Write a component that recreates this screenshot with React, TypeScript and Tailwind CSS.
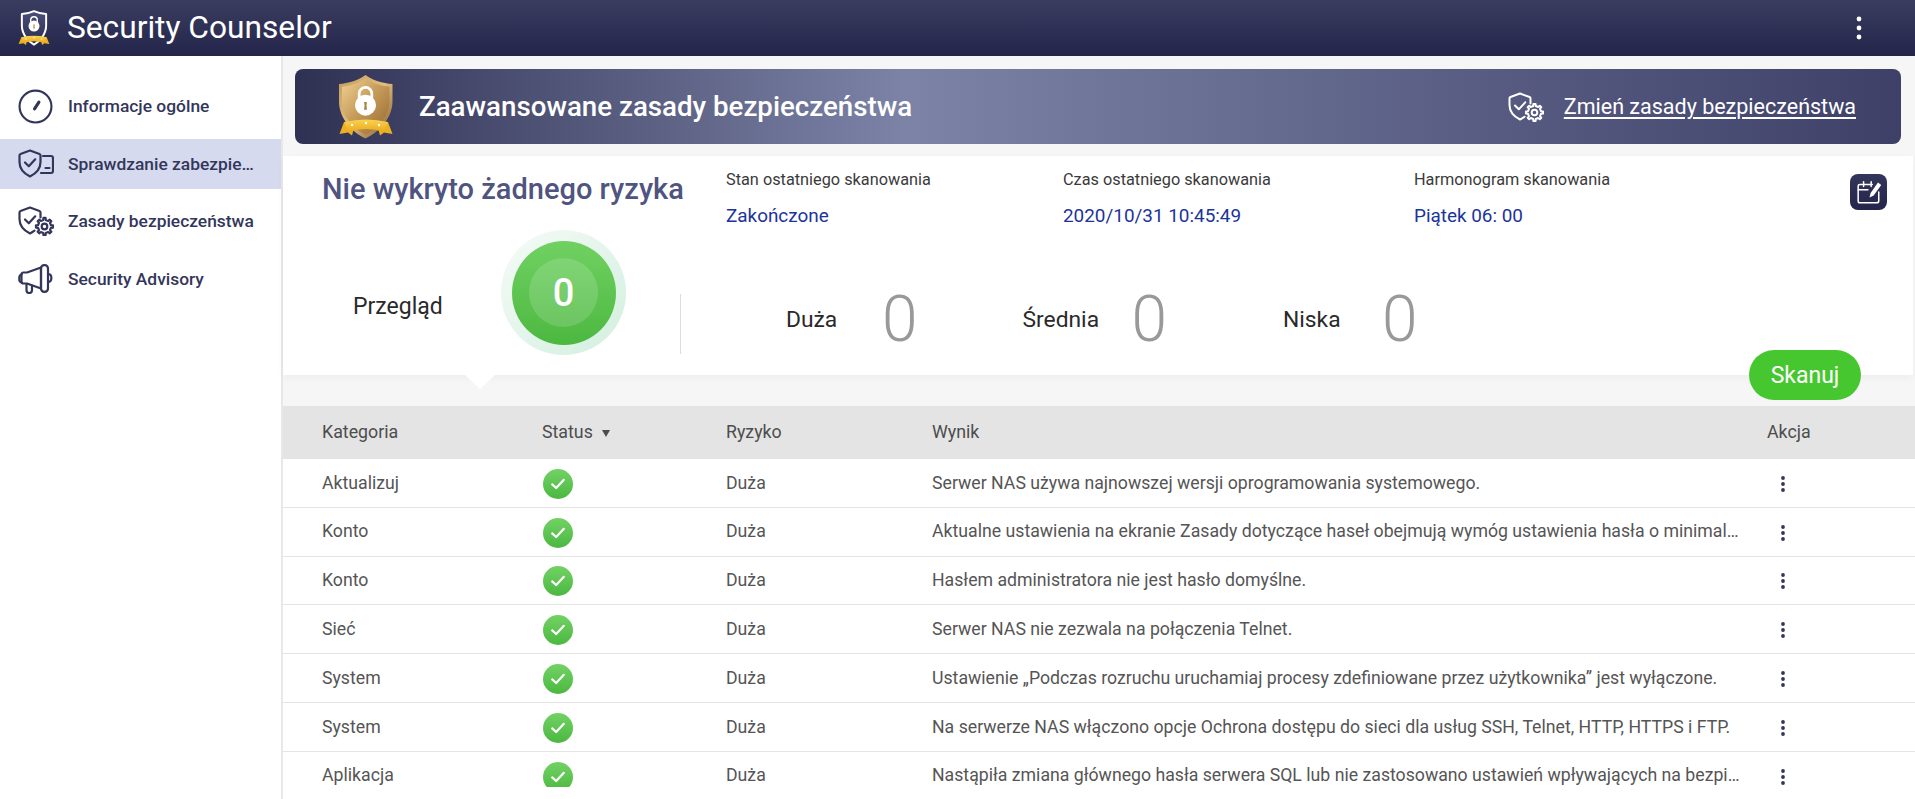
import React from "react";

const navy = "#33365a";

function gearPath(cx: number, cy: number, r1: number, r2: number, n: number) {
  const pts: string[] = [];
  const step = (Math.PI * 2) / n;
  for (let i = 0; i < n; i++) {
    const a = i * step;
    const d = step * 0.2;
    const p = (r: number, t: number) => `${(cx + r * Math.cos(t)).toFixed(2)} ${(cy + r * Math.sin(t)).toFixed(2)}`;
    pts.push(`${i === 0 ? "M" : "L"}${p(r1, a - d * 1.25)}`);
    pts.push(`L${p(r2, a - d * 0.8)}`);
    pts.push(`L${p(r2, a + d * 0.8)}`);
    pts.push(`L${p(r1, a + d * 1.25)}`);
  }
  return pts.join(" ") + " Z";
}

const FULL_SHIELD = "M12 1.5 L21.5 5 Q22.5 5.3 22.5 6.5 V13 C22.5 20 17 25 12 27.5 C7 25 1.5 20 1.5 13 V6.5 Q1.5 5.3 2.5 5 Z";
const OPEN_SHIELD = "M22.5 11.5 V6.5 Q22.5 5.3 21.5 5 L12 1.5 L2.5 5 Q1.5 5.3 1.5 6.5 V13 C1.5 20 7 25 12 27.5 C13.5 26.8 15 25.8 16.5 24.7";

function ShieldGear({ color, className, sw = 2.2 }: { color: string; className: string; sw?: number }) {
  return (
    <svg viewBox="0 0 36 30" className={className} fill="none" stroke={color} strokeWidth={sw} strokeLinejoin="round" strokeLinecap="round">
      <path d={OPEN_SHIELD} />
      <path d="M7 13.5 l3.8 3.8 l6.4 -7" />
      <path d={gearPath(26.5, 20.5, 6.6, 8.6, 8)} />
      <circle cx="26.5" cy="20.5" r="2.8" />
    </svg>
  );
}

function ShieldCard({ className }: { className: string }) {
  return (
    <svg viewBox="0 0 36 30" className={className} fill="none" stroke={navy} strokeWidth={2.2} strokeLinejoin="round" strokeLinecap="round">
      <path d={FULL_SHIELD} />
      <path d="M7 13.5 l3.8 3.8 l6.4 -7" />
      <path d="M25 7 H33 Q35 7 35 9 V22 Q35 24 33 24 H23" />
      <path d="M27.5 19 H31.5" />
    </svg>
  );
}

function Gauge({ className }: { className: string }) {
  return (
    <svg viewBox="0 0 36 36" className={className} fill="none" stroke={navy} strokeLinecap="round">
      <circle cx="18" cy="18" r="16.4" strokeWidth="2.2" />
      <path d="M17 20.5 L21.5 13.5" strokeWidth="3.2" />
    </svg>
  );
}

function Megaphone({ className }: { className: string }) {
  return (
    <svg viewBox="0 0 36 30" className={className} fill="none" stroke={navy} strokeWidth={2.2} strokeLinejoin="round" strokeLinecap="round">
      <path d="M3.5 10.5 C0.5 11 0.5 18 3.5 18.5" />
      <path d="M5.5 8.5 H9 L23 3.5 V24.5 L9 19.5 H5.5 Q3.5 19.5 3.5 17.5 V10.5 Q3.5 8.5 5.5 8.5 Z" />
      <rect x="23" y="1.2" width="7" height="26.6" rx="3.2" />
      <path d="M30 10 C34.5 10 34.5 18 30 18" />
      <path d="M8.5 20 V26 Q8.5 29 11.2 29 Q14 29 14 26 V21.5" />
    </svg>
  );
}

function Ribbon({ id }: { id: string }) {
  return (
    <>
      <defs>
        <linearGradient id={id} x1="0" y1="0" x2="0" y2="1">
          <stop offset="0" stopColor="#f9d34d" />
          <stop offset="1" stopColor="#eba91f" />
        </linearGradient>
      </defs>
      <path d="M5 47 L0.5 59 L9 57.5 L13 60.5 L15 53 Z" fill="#eeb023" />
      <path d="M49 47 L53.5 59 L45 57.5 L41 60.5 L39 53 Z" fill="#eeb023" />
      <path d="M5 47 Q27 42 49 47 L45 57 Q27 51 9 57 Z" fill={`url(#${id})`} />
      <circle cx="13" cy="50" r="1.2" fill="#fff" />
      <circle cx="27" cy="48" r="1.2" fill="#fff" />
      <circle cx="40" cy="50" r="1.2" fill="#fff" />
    </>
  );
}

function Lock({ cx, cy, s }: { cx: number; cy: number; s: number }) {
  return (
    <g transform={`translate(${cx} ${cy}) scale(${s})`}>
      <path d="M-6 -3 V-7 A6 6 0 0 1 6 -7 V-3" fill="none" stroke="#fff" strokeWidth="2.6" />
      <circle cx="0" cy="4" r="10" fill="#fff" />
      <path d="M-1.3 1 h2.6 l-0.4 3.4 l0.5 4 h-2.8 l0.5 -4 Z" fill="#a9803f" />
    </g>
  );
}

function GoldShield({ className }: { className: string }) {
  return (
    <svg viewBox="0 0 54 64" className={className}>
      <defs>
        <linearGradient id="goldOuter" x1="0" y1="0" x2="1" y2="1">
          <stop offset="0" stopColor="#c39a5f" />
          <stop offset="0.5" stopColor="#e2bf80" />
          <stop offset="1" stopColor="#7c552a" />
        </linearGradient>
        <linearGradient id="goldInner" x1="0" y1="0" x2="1" y2="1">
          <stop offset="0" stopColor="#f0d193" />
          <stop offset="0.45" stopColor="#c89d5c" />
          <stop offset="1" stopColor="#94682f" />
        </linearGradient>
      </defs>
      <path d="M26.5 0 C33 5 44 8.5 53.5 9 V27 C53 44 40 57 26.5 63.5 C13 57 0.5 44 0 27 V9 C9 8.5 20 5 26.5 0 Z" fill="url(#goldOuter)" />
      <path d="M26.5 3.5 C33 8 42 11 50.5 11.7 V27 C50 42 38 53.5 26.5 60 C15 53.5 3 42 3 27 V11.7 C11 11 20 8 26.5 3.5 Z" fill="url(#goldInner)" />
      <Lock cx={26.5} cy={26} s={1.05} />
      <Ribbon id="ribbonBig" />
    </svg>
  );
}

function HeaderLogo({ className }: { className: string }) {
  return (
    <svg viewBox="0 0 54 64" className={className}>
      <defs>
        <linearGradient id="logoFill" x1="0" y1="0" x2="0" y2="1">
          <stop offset="0" stopColor="#4b4f78" />
          <stop offset="1" stopColor="#282b50" />
        </linearGradient>
      </defs>
      <path d="M27 2 C34 5 42 7 48 7 V27 C48 42 37 54 27 60 C17 54 6 42 6 27 V7 C12 7 20 5 27 2 Z" fill="url(#logoFill)" stroke="#fff" strokeWidth="3.4" strokeLinejoin="round" />
      <Lock cx={27} cy={24} s={0.95} />
      <Ribbon id="ribbonSmall" />
    </svg>
  );
}

function CalendarEdit({ className }: { className: string }) {
  return (
    <svg viewBox="0 0 24 24" className={className} fill="none" stroke="#fff" strokeWidth="1.4" strokeLinecap="round" strokeLinejoin="round">
      <path d="M21 12 V20 Q21 22 19 22 H3.5 Q2 22 2 20 V6.5 Q2 5 3.5 5 H15" />
      <path d="M2 10 H11" />
      <path d="M7 2.5 V7" />
      <path d="M14 2.5 V7" />
      <path d="M12.5 17 L13.5 13 L20.3 3.2 L23.3 5.5 L16.3 15.2 Z" fill="#fff" stroke="none" />
    </svg>
  );
}

function CheckBadge() {
  return (
    <div className="flex h-[30px] w-[30px] items-center justify-center rounded-full bg-gradient-to-b from-[#72d265] to-[#4ab83f]">
      <svg viewBox="0 0 16 16" className="h-[16px] w-[16px]" fill="none" stroke="#fff" strokeWidth="2.2" strokeLinecap="round" strokeLinejoin="round">
        <path d="M2.2 8.4 L6.2 12 L13.8 3.8" />
      </svg>
    </div>
  );
}

const nav = [
  { label: "Informacje ogólne", icon: <Gauge className="h-[35px] w-[35px]" /> },
  { label: "Sprawdzanie zabezpieczeń", icon: <ShieldCard className="h-[30px] w-[36px]" />, active: true },
  { label: "Zasady bezpieczeństwa", icon: <ShieldGear color={navy} className="h-[30px] w-[36px]" /> },
  { label: "Security Advisory", icon: <Megaphone className="h-[30px] w-[36px]" /> },
];

const rows = [
  ["Aktualizuj", "Serwer NAS używa najnowszej wersji oprogramowania systemowego."],
  ["Konto", "Aktualne ustawienia na ekranie Zasady dotyczące haseł obejmują wymóg ustawienia hasła o minimalnej długości co najmniej ośmiu znaków."],
  ["Konto", "Hasłem administratora nie jest hasło domyślne."],
  ["Sieć", "Serwer NAS nie zezwala na połączenia Telnet."],
  ["System", "Ustawienie „Podczas rozruchu uruchamiaj procesy zdefiniowane przez użytkownika” jest wyłączone."],
  ["System", "Na serwerze NAS włączono opcje Ochrona dostępu do sieci dla usług SSH, Telnet, HTTP, HTTPS i FTP."],
  ["Aplikacja", "Nastąpiła zmiana głównego hasła serwera SQL lub nie zastosowano ustawień wpływających na bezpieczeństwo serwera SQL."],
];

const cols = "grid grid-cols-[220px_184px_206px_835px_1fr] items-center pl-[39px]";

function Info({ label, value, width }: { label: string; value: string; width: string }) {
  return (
    <div className={`${width} shrink-0`}>
      <div className="text-[16.3px] leading-[18px] text-[#3a3a3a]">{label}</div>
      <div className="mt-[17px] text-[18.9px] leading-[20px] text-[#1b349b]">{value}</div>
    </div>
  );
}

function Level({ label, width }: { label: string; width: string }) {
  return (
    <div className="flex items-center">
      <div className={`${width} text-[22.8px] leading-[30px] text-[#2a2a2a]`}>{label}</div>
      <div className="text-[64px] font-light leading-[64px] text-[#999999]">0</div>
    </div>
  );
}

export default function App() {
  return (
    <div className="flex h-[799px] w-[1915px] flex-col overflow-hidden bg-white font-['Roboto',sans-serif]">
      <header className="flex h-14 shrink-0 items-center bg-gradient-to-b from-[#3a3d60] to-[#23264a] pl-[18px] pr-[53px]">
        <HeaderLogo className="h-[37px] w-[32px]" />
        <div className="ml-[17px] text-[31.7px] leading-none text-white">Security Counselor</div>
        <svg viewBox="0 0 6 24" className="ml-auto h-[24px] w-[6px]" fill="#fff">
          <circle cx="3" cy="3" r="2.4" />
          <circle cx="3" cy="12" r="2.4" />
          <circle cx="3" cy="21" r="2.4" />
        </svg>
      </header>
      <div className="flex min-h-0 flex-1">
        <aside className="flex w-[283px] shrink-0 flex-col gap-[7.6px] border-r-2 border-[#e8e8e8] pt-[25px]">
          {nav.map((n) => (
            <div key={n.label} className={`flex h-[50px] w-[281px] items-center ${n.active ? "bg-[#d5daef]" : ""}`}>
              <div className="flex w-[68px] shrink-0 justify-center pl-[3px]">{n.icon}</div>
              <div className="mr-[25px] min-w-0 truncate text-[17.4px] font-medium leading-[24px] text-[#33365a]">{n.label}</div>
            </div>
          ))}
        </aside>
        <main className="flex min-w-0 flex-1 flex-col bg-[#f6f6f6] pt-[13px]">
          <div className="ml-[12px] mr-[14px] flex h-[75px] shrink-0 items-center rounded-lg bg-[linear-gradient(90deg,#2f3153_0%,#7c83a6_38%,#3e4068_100%)] pl-[44px] pr-[45px]">
            <GoldShield className="h-[64px] w-[54px] shrink-0" />
            <div className="ml-[26px] text-[27.7px] font-medium leading-none text-white">Zaawansowane zasady bezpieczeństwa</div>
            <ShieldGear color="#fff" sw={2} className="ml-auto h-[30px] w-[36px]" />
            <div className="ml-[20px] text-[21.5px] leading-none text-white underline underline-offset-[3px]">Zmień zasady bezpieczeństwa</div>
          </div>
          <section className="relative mr-[2px] mt-[12px] h-[219px] shrink-0 bg-white shadow-[0_3px_8px_rgba(0,0,0,0.04)]">
            <div className="flex pl-[39px] pt-[15px]">
              <div className="w-[404px] shrink-0 pt-[2px] text-[29px] font-medium leading-[33px] text-[#4f5480]">Nie wykryto żadnego ryzyka</div>
              <Info label="Stan ostatniego skanowania" value="Zakończone" width="w-[337px]" />
              <Info label="Czas ostatniego skanowania" value="2020/10/31 10:45:49" width="w-[351px]" />
              <Info label="Harmonogram skanowania" value="Piątek 06: 00" width="w-[300px]" />
              <div className="ml-[136px] mt-[3px] flex h-[36px] w-[37px] shrink-0 items-center justify-center rounded-lg bg-gradient-to-b from-[#33365a] to-[#23264a]">
                <CalendarEdit className="h-[26px] w-[26px]" />
              </div>
            </div>
            <div className="mt-[4px] flex items-start pl-[70px]">
              <div className="mt-[62px] w-[148px] text-[23px] leading-[30px] text-[#2a2a2a]">Przegląd</div>
              <div className="flex h-[125px] w-[125px] items-center justify-center rounded-full bg-gradient-to-br from-[#f6fbf7] to-[#d2efdf]">
                <div className="flex h-[104px] w-[104px] items-center justify-center rounded-full bg-gradient-to-b from-[#70d162] to-[#4cb840]">
                  <div className="flex h-[69px] w-[69px] items-center justify-center rounded-full bg-white/15 text-[38px] font-medium leading-none text-white">0</div>
                </div>
              </div>
              <div className="ml-[54px] mt-[64px] h-[60px] w-px bg-[#dddddd]" />
              <div className="ml-[105px] mt-[58px] flex items-center">
                <Level label="Duża" width="w-[96px]" />
                <div className="w-[105px]" />
                <Level label="Średnia" width="w-[109px]" />
                <div className="w-[116px]" />
                <Level label="Niska" width="w-[99px]" />
              </div>
            </div>
            <svg viewBox="0 0 30 14" className="absolute left-[182px] top-full h-[14px] w-[30px]" fill="#fff">
              <path d="M0 0 H30 L15 14 Z" />
            </svg>
            <button className="absolute left-[1466px] top-[194px] flex h-[50px] w-[112px] items-center justify-center rounded-full bg-[#47c72f] text-[23px] leading-none text-white">Skanuj</button>
          </section>
          <div className="mt-[31px] min-h-0 flex-1 bg-white">
            <div className="h-[381px] overflow-hidden">
              <div className={`${cols} h-[53px] bg-[#e4e4e4] text-[17.8px] text-[#4d4d4d]`}>
                <div>Kategoria</div>
                <div className="flex items-center">
                  Status
                  <svg viewBox="0 0 8 7" className="ml-[9px] mt-[2px] h-[7px] w-[8px]" fill="#4d4d4d">
                    <path d="M0 0 H8 L4 7 Z" />
                  </svg>
                </div>
                <div>Ryzyko</div>
                <div>Wynik</div>
                <div>Akcja</div>
              </div>
              {rows.map((r, i) => (
                <div key={i} className={`${cols} h-[48.8px] border-b border-[#e4e4e4] text-[17.7px] text-[#555555]`}>
                  <div>{r[0]}</div>
                  <div className="pl-[1px] pt-[2px]">
                    <CheckBadge />
                  </div>
                  <div>Duża</div>
                  <div className="truncate pr-[26px]">{r[1]}</div>
                  <div className="pl-[14px] pt-[2px]">
                    <svg viewBox="0 0 4 16" className="h-[16px] w-[4px]" fill="#33365a">
                      <circle cx="2" cy="2" r="1.9" />
                      <circle cx="2" cy="8" r="1.9" />
                      <circle cx="2" cy="14" r="1.9" />
                    </svg>
                  </div>
                </div>
              ))}
            </div>
          </div>
        </main>
      </div>
    </div>
  );
}
